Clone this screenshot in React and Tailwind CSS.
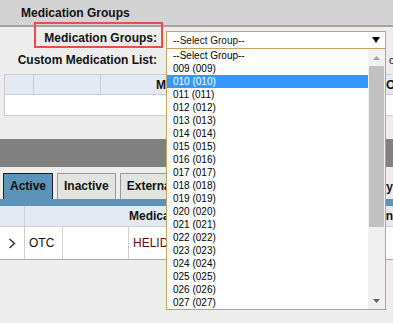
import React from "react";

const groups = [
  "--Select Group--",
  "009 (009)",
  "010 (010)",
  "011 (011)",
  "012 (012)",
  "013 (013)",
  "014 (014)",
  "015 (015)",
  "016 (016)",
  "017 (017)",
  "018 (018)",
  "019 (019)",
  "020 (020)",
  "021 (021)",
  "022 (022)",
  "023 (023)",
  "024 (024)",
  "025 (025)",
  "026 (026)",
  "027 (027)",
];

const GroupDropdown = () => {
  return (
    <div className="absolute left-[166px] top-[48px] w-[220px] h-[262px] border border-[#c9a15f] bg-white flex">
      <ul className="flex-1 text-[10px] text-black">
        {groups.map((g) => (
          <li
            key={g}
            className={`h-[13px] leading-[13px] pl-[6px] ${
              g === "010 (010)" ? "bg-[#3399ff] text-white" : ""
            }`}
          >
            {g}
          </li>
        ))}
      </ul>
      {/* scrollbar */}
      <div className="w-[17px] bg-[#f0f0f0] flex flex-col">
        <div className="h-[17px] flex items-center justify-center">
          <svg width="7" height="4" viewBox="0 0 7 4">
            <path d="M0 4 L3.5 0 L7 4 Z" fill="#a3a3a3" />
          </svg>
        </div>
        <div className="h-[161px] mx-[1px] bg-[#c1c1c1]" />
        <div className="flex-1" />
        <div className="h-[17px] flex items-center justify-center">
          <svg width="7" height="4" viewBox="0 0 7 4">
            <path d="M0 0 L7 0 L3.5 4 Z" fill="#606060" />
          </svg>
        </div>
      </div>
    </div>
  );
};

const App = () => {
  return (
    <div className="relative w-[393px] h-[323px] overflow-hidden bg-[#ededed] font-['Liberation_Sans',Arial,sans-serif] text-[#111]">
      {/* page header */}
      <div className="h-[27px] bg-[#d3d3d3] border-b-2 border-[#a3a3a3] pl-[21px] text-[12px] font-bold leading-[26px]">
        Medication Groups
      </div>

      {/* form rows */}
      <div className="mt-[4px] flex items-center h-[18px]">
        <label className="w-[157px] text-right text-[12px] font-bold mb-[4px] whitespace-nowrap">
          Medication Groups:
        </label>
        <div className="ml-[9px] w-[220px] h-[18px] border border-[#c9a15f] bg-white flex items-center justify-between pl-[6px] pr-[5px] text-[10px]">
          <span>--Select Group--</span>
          <svg width="8" height="6" viewBox="0 0 8 6">
            <path d="M0 0 L8 0 L4 6 Z" fill="#000" />
          </svg>
        </div>
      </div>
      <div className="mt-[2px] flex items-center h-[18px] whitespace-nowrap">
        <label className="w-[157px] shrink-0 text-right text-[12px] font-bold">
          Custom Medication List:
        </label>
        <div className="ml-[9px] w-[220px] shrink-0 h-[18px]" />
        <span className="ml-[3px] text-[11px]">clear</span>
      </div>

      {/* custom list table */}
      <div className="mt-[5px] ml-[4px] w-[420px] border border-[#cccccc] bg-white">
        <div className="h-[20px] flex bg-[#e3eaf3] border-b border-[#cccccc] text-[12px] font-bold leading-[20px] whitespace-nowrap">
          <div className="w-[29px] border-r border-[#cccccc]" />
          <div className="w-[67px] border-r border-[#cccccc]" />
          <div className="w-[284px] pl-[55px] overflow-hidden">
            <div className="w-[10px] overflow-hidden">Medication</div>
          </div>
          <div className="pl-[1px]">Order</div>
        </div>
        <div className="h-[20px]" />
      </div>

      {/* section divider */}
      <div className="mt-[23px] h-[28px] bg-[#808080]" />

      {/* tabs */}
      <div className="mt-[6px] h-[26px] flex items-end text-[12px] font-bold whitespace-nowrap">
        <div className="ml-[3px] h-[26px] px-[6px] leading-[25px] bg-[#5b93bb] border border-b-0 border-[#1e1e1e]">
          Active
        </div>
        <div className="ml-[4px] h-[26px] px-[6px] leading-[24px] bg-[#e1e4e1] border border-b-0 border-[#9a9a9a]">
          Inactive
        </div>
        <div className="ml-[4px] w-[47px] h-[26px] pl-[6px] leading-[24px] bg-[#e1e4e1] border border-b-0 border-r-0 border-[#9a9a9a] overflow-hidden">
          External
        </div>
        <div className="ml-auto leading-[24px]">History</div>
      </div>
      <div className="h-[7px] bg-[#5b93bb]" />

      {/* medications table */}
      <div className="bg-white">
        <div className="h-[21px] flex bg-[#e3eaf3] border-b border-[#cfcfcf] text-[12px] font-bold leading-[20px] whitespace-nowrap">
          <div className="w-[25px] border-r border-[#cfcfcf]" />
          <div className="w-[141px] pl-[104px] overflow-hidden">Medication</div>
          <div className="flex-1" />
          <div>Action</div>
        </div>
        <div className="h-[33px] flex border-b border-[#a9a9a9] text-[12px] leading-[32px] whitespace-nowrap">
          <div className="w-[25px] border-r border-[#cfcfcf] flex items-center justify-center">
            <svg width="8" height="11" viewBox="0 0 8 11">
              <path d="M1.5 1 L6.5 5.5 L1.5 10" fill="none" stroke="#222" strokeWidth="1.2" />
            </svg>
          </div>
          <div className="w-[38px] border-r border-[#cfcfcf] pl-[4px]">OTC</div>
          <div className="w-[66px] border-r border-[#cfcfcf]" />
          <div className="w-[37px] pl-[4px] overflow-hidden text-[#5a0c0c]">HELIDAC</div>
        </div>
      </div>

      {/* annotation */}
      <div className="absolute left-[34px] top-[22px] w-[129px] h-[26px] border-2 border-[#ee4b4b]" />

      <GroupDropdown />
    </div>
  );
};

export default App;
